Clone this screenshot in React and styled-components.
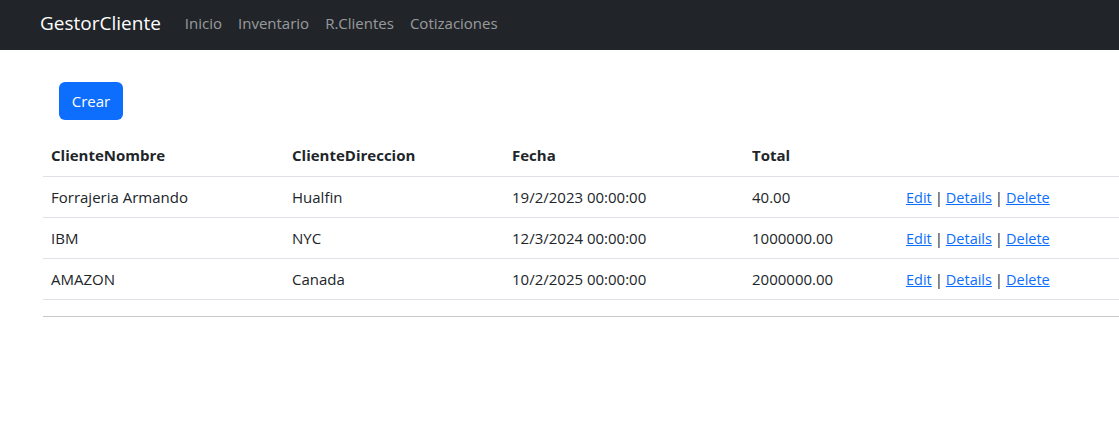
import React from 'react';
import styled, { createGlobalStyle } from 'styled-components';

const GlobalStyle = createGlobalStyle`
  html, body {
    margin: 0;
    padding: 0;
    overflow-x: hidden;
    background: #fff;
    font-family: "Open Sans", "Noto Sans", sans-serif;
    font-size: 15px;
    color: #212529;
  }
`;

const Navbar = styled.nav`
  height: 50px;
  background-color: #212529;
  display: flex;
  align-items: center;
  padding: 0 0 4px 40px;
  box-sizing: border-box;
`;

const Brand = styled.a`
  color: #fff;
  font-size: 19px;
  margin-right: 24px;
  text-decoration: none;
`;

const NavLinks = styled.div`
  display: flex;
  gap: 16px;
`;

const NavLink = styled.a`
  color: rgba(255, 255, 255, 0.55);
  font-size: 15px;
  text-decoration: none;
`;

const Main = styled.main`
  padding: 32px 0 0 43px;
`;

const Toolbar = styled.div`
  padding-left: 16px;
  margin-bottom: 15px;
`;

const CreateButton = styled.a`
  display: inline-flex;
  align-items: center;
  justify-content: center;
  width: 64px;
  height: 38px;
  box-sizing: border-box;
  background-color: #0d6efd;
  color: #fff;
  border-radius: 6px;
  text-decoration: none;
  font-size: 15px;
`;

const Table = styled.table`
  width: 1100px;
  border-collapse: collapse;
`;

const Th = styled.th`
  text-align: left;
  font-weight: 700;
  padding: 8px;
  height: 41px;
  box-sizing: border-box;
  width: ${(p) => p.$w || 'auto'};
  border-bottom: 1px solid #dee2e6;
`;

const Td = styled.td`
  padding: 8px;
  height: 41px;
  box-sizing: border-box;
  border-bottom: 1px solid #dee2e6;
`;

const Actions = styled.td`
  padding: 8px;
  height: 41px;
  box-sizing: border-box;
  border-bottom: 1px solid #dee2e6;
  word-spacing: -1px;
`;

const Divider = styled.hr`
  margin: 16px 0 0 0;
  width: 1100px;
  border: 0;
  border-top: 1px solid #c8c8c8;
`;

const ActionLink = styled.a`
  color: #0d6efd;
  text-decoration: underline;
  font-size: 14.5px;
`;

const rows = [
  { nombre: 'Forrajeria Armando', dir: 'Hualfin', fecha: '19/2/2023 00:00:00', total: '40.00' },
  { nombre: 'IBM', dir: 'NYC', fecha: '12/3/2024 00:00:00', total: '1000000.00' },
  { nombre: 'AMAZON', dir: 'Canada', fecha: '10/2/2025 00:00:00', total: '2000000.00' },
];

export default function App() {
  return (
    <>
      <GlobalStyle />
      <Navbar>
        <Brand href="#">GestorCliente</Brand>
        <NavLinks>
          <NavLink href="#">Inicio</NavLink>
          <NavLink href="#">Inventario</NavLink>
          <NavLink href="#">R.Clientes</NavLink>
          <NavLink href="#">Cotizaciones</NavLink>
        </NavLinks>
      </Navbar>
      <Main>
        <Toolbar>
          <CreateButton href="#">Crear</CreateButton>
        </Toolbar>
        <Table>
          <thead>
            <tr>
              <Th $w="241px">ClienteNombre</Th>
              <Th $w="220px">ClienteDireccion</Th>
              <Th $w="240px">Fecha</Th>
              <Th $w="154px">Total</Th>
              <Th />
            </tr>
          </thead>
          <tbody>
            {rows.map((r) => (
              <tr key={r.nombre}>
                <Td>{r.nombre}</Td>
                <Td>{r.dir}</Td>
                <Td>{r.fecha}</Td>
                <Td>{r.total}</Td>
                <Actions>
                  <ActionLink href="#">Edit</ActionLink> |{' '}
                  <ActionLink href="#">Details</ActionLink> |{' '}
                  <ActionLink href="#">Delete</ActionLink>
                </Actions>
              </tr>
            ))}
          </tbody>
        </Table>
        <Divider />
      </Main>
    </>
  );
}
